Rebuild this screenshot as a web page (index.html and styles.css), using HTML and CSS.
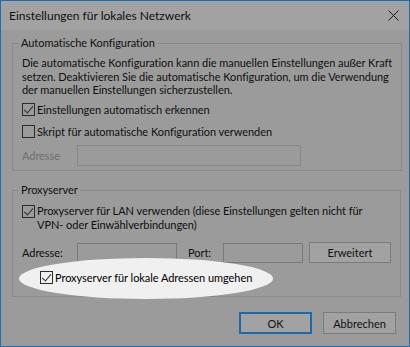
FILE: index.html
```html
<!DOCTYPE html>
<html lang="de">
<head>
    <meta charset="UTF-8">
    <title>Einstellungen für lokales Netzwerk</title>
    <link rel="stylesheet" href="styles.css">
</head>
<body>
    <div class="window">
        <div class="titlebar">
            <span class="title">Einstellungen für lokales Netzwerk</span>
            <svg class="close" width="11" height="11" viewBox="0 0 11 11">
                <path d="M0.5 0.5 L10.5 10.5 M10.5 0.5 L0.5 10.5" stroke="#1a1a1a" stroke-width="1"/>
            </svg>
        </div>

        <div class="content">
            <fieldset class="group group-auto">
                <legend>Automatische Konfiguration</legend>
                <p class="desc">Die automatische Konfiguration kann die manuellen Einstellungen außer Kraft<br>setzen. Deaktivieren Sie die automatische Konfiguration, um die Verwendung<br>der manuellen Einstellungen sicherzustellen.</p>
                <label class="check-row row-first">
                    <span class="box checked"></span>
                    <span>Einstellungen automatisch erkennen</span>
                </label>
                <label class="check-row row-second">
                    <span class="box"></span>
                    <span>Skript für automatische Konfiguration verwenden</span>
                </label>
                <div class="field-row row-script">
                    <span class="label disabled">Adresse</span>
                    <span class="input input-wide disabled-input"></span>
                </div>
            </fieldset>

            <fieldset class="group group-proxy">
                <legend>Proxyserver</legend>
                <label class="check-row multi">
                    <span class="box checked"></span>
                    <span>Proxyserver für LAN verwenden (diese Einstellungen gelten nicht für<br>VPN- oder Einwählverbindungen)</span>
                </label>
                <div class="field-row row-proxy">
                    <span class="label">Adresse:</span>
                    <span class="input input-addr"></span>
                    <span class="label label-port">Port:</span>
                    <span class="input input-port"></span>
                    <button class="btn btn-advanced">Erweitert</button>
                </div>
                <div class="spot"></div>
                <label class="check-row row-bypass">
                    <span class="box checked"></span>
                    <span>Proxyserver für lokale Adressen umgehen</span>
                </label>
            </fieldset>

            <div class="actions">
                <button class="btn btn-ok">OK</button>
                <button class="btn">Abbrechen</button>
            </div>
        </div>
    </div>
</body>
</html>
```

FILE: styles.css
```css
body {
    margin: 0;
    font-family: Lato, 'Liberation Sans', sans-serif;
    font-size: 11px;
    letter-spacing: -0.05px;
    color: #101010;
    background: #9b9b9b;
}

.window {
    position: relative;
    width: 408px;
    height: 345px;
    border: 1px solid #1a6fb3;
    background: #9b9b9b;
    overflow: hidden;
}

.titlebar {
    height: 29px;
    display: flex;
    align-items: center;
    justify-content: space-between;
    padding: 0 10px 0 8px;
    background: #a2a2a2;
}

.title {
    font-size: 12px;
    letter-spacing: 0;
    margin-top: -1px;
}

.close {
    margin-top: -1px;
}

.content {
    padding: 5px 10px 0 11px;
}

/* Group boxes */
.group {
    margin: 0;
    border: 1px solid #8a8a8a;
    padding: 0 9px 4px 9px;
}

.group legend {
    padding: 0 2px;
    margin-left: -3px;
    line-height: 16px;
}

.group-proxy {
    margin-top: 11px;
    padding-bottom: 11px;
}

.desc {
    margin: 5px 0 0;
    line-height: 13.7px;
    white-space: nowrap;
}

/* Checkbox rows */
.check-row {
    display: flex;
    align-items: center;
    gap: 2px;
    height: 16px;
    position: relative;
}

.row-first {
    margin-top: 4px;
}

.row-second {
    margin-top: 6px;
}

.check-row.multi {
    align-items: flex-start;
    height: auto;
    margin-top: 6px;
    line-height: 13.5px;
}

.check-row.multi .box {
    margin-top: 1px;
}

.row-bypass {
    margin-top: 6px;
    margin-left: 18px;
    color: #000;
    z-index: 1;
}

.box {
    width: 11px;
    height: 11px;
    flex: none;
    border: 1px solid #2c2c2c;
    position: relative;
}

.box.checked::after {
    content: "";
    position: absolute;
    left: 3px;
    top: 0px;
    width: 4px;
    height: 8px;
    border: solid #2c2c2c;
    border-width: 0 1px 1px 0;
    transform: rotate(40deg);
}

/* Field rows */
.field-row {
    display: flex;
    align-items: center;
}

.row-script {
    margin-top: 6px;
}

.row-proxy {
    margin-top: 11px;
}

.label {
    width: 55px;
    flex: none;
}

.label.disabled {
    color: #707070;
}

.label-port {
    width: 35px;
    margin-left: 11px;
}

.input {
    display: block;
    height: 18px;
    border: 1px solid #7a7a7a;
    box-sizing: content-box;
}

.input-wide {
    width: 222px;
    height: 19px;
}

.disabled-input {
    border-color: #888;
}

.input-addr {
    width: 98px;
}

.input-port {
    width: 78px;
}

/* Buttons */
.btn {
    font-family: inherit;
    font-size: 11px;
    color: #101010;
    background: #a2a2a2;
    border: 1px solid #7b7b7b;
    height: 21px;
    padding: 0;
    box-sizing: border-box;
}

.btn-advanced {
    width: 82px;
    margin-left: 6px;
}

.actions {
    display: flex;
    justify-content: flex-end;
    gap: 11px;
    margin-top: 15px;
    padding-right: 3px;
}

.actions .btn {
    width: 73px;
    height: 22px;
}

.btn-ok {
    border: 2px solid #1d6aab;
}

/* Spotlight highlight over the bypass option */
.spot {
    position: absolute;
    left: 18px;
    top: 257px;
    width: 254px;
    height: 41px;
    border-radius: 50%;
    background: #f0f0f0;
}
```
